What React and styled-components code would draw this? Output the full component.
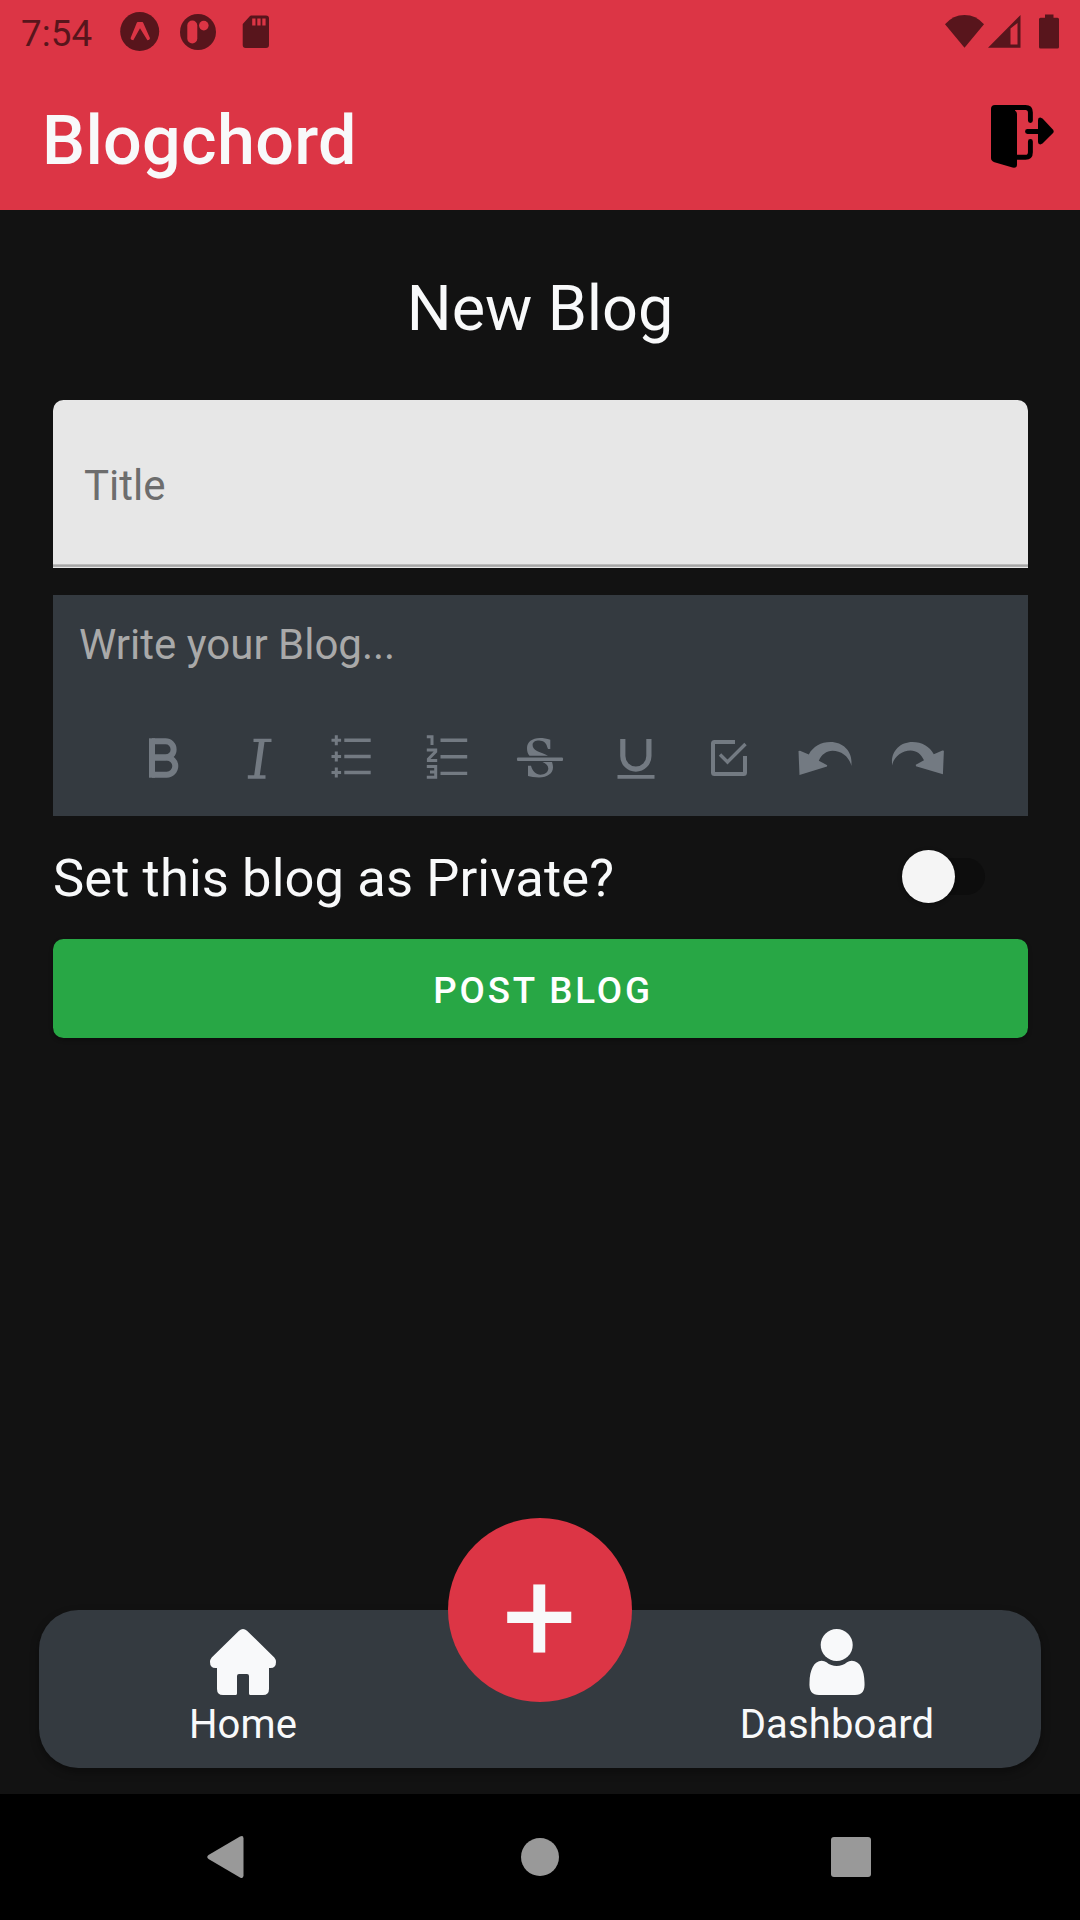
import React from "react";
import styled, { createGlobalStyle } from "styled-components";

const GlobalStyle = createGlobalStyle`
  * { box-sizing: border-box; }
  body {
    margin: 0;
    background: #121212;
    font-family: Roboto, "Noto Sans", sans-serif;
    -webkit-font-smoothing: antialiased;
  }
`;

const Screen = styled.div`
  width: 1080px;
  height: 1920px;
  display: flex;
  flex-direction: column;
  background: #121212;
  color: #f8f9fa;
  overflow: hidden;
`;

const Icon = styled.svg`
  display: block;
  flex: none;
  overflow: visible;
`;

const StatusBar = styled.div`
  height: 63px;
  display: flex;
  justify-content: space-between;
  padding: 0 21px;
  background: #dc3545;
  color: #58151c;
`;

const StatusGroup = styled.div`
  display: flex;
  align-items: center;
  gap: ${(p) => p.$gap}px;
`;

const Clock = styled.span`
  width: 78px;
  padding-top: 4px;
  font-size: 36.75px;
  letter-spacing: 0.1px;
`;

const AppBar = styled.header`
  height: 147px;
  display: flex;
  align-items: center;
  justify-content: space-between;
  padding: 0 26px 0 42px;
  background: #dc3545;
`;

const Brand = styled.h1`
  margin: 0;
  padding-top: 8px;
  font-size: 68.25px;
  font-weight: 500;
  letter-spacing: 0.3px;
`;

const LogoutButton = styled.button`
  border: 0;
  padding: 0;
  background: none;
  color: #000;
`;

const Form = styled.main`
  flex: 1;
  display: flex;
  flex-direction: column;
  padding: 0 52px 0 53px;
`;

const Heading = styled.h2`
  height: 190px;
  margin: 0;
  padding: 7px 1px 0 0;
  line-height: 183px;
  text-align: center;
  font-size: 63px;
  font-weight: 400;
  letter-spacing: -0.1px;
`;

const TitleField = styled.div`
  height: 168px;
  padding: 4px 31px 0;
  line-height: 164px;
  border-radius: 10.5px 10.5px 0 0;
  background: linear-gradient(#bdbdbd 1px, #a6a6a6 1px 2px, #b0b0b0 2px) 0 164px / 100% 3px no-repeat #e7e7e7;
  color: #6d6d6d;
  font-size: 42px;
`;

const Editor = styled.section`
  height: 221px;
  margin-top: 27px;
  display: flex;
  flex-direction: column;
  background: #343a40;
`;

const EditorText = styled.div`
  height: 105px;
  padding: 0 26px;
  line-height: 100px;
  color: #a9a9a9;
  font-size: 42px;
`;

const Toolbar = styled.div`
  height: 116px;
  display: flex;
  justify-content: center;
  padding-right: 1px;
  color: #737a82;
`;

const Tool = styled.button`
  width: 94.5px;
  height: 116px;
  display: flex;
  justify-content: center;
  padding: 28px 0 0;
  border: 0;
  background: none;
  color: inherit;
`;

const PrivacyRow = styled.div`
  height: 123px;
  display: flex;
  align-items: center;
  justify-content: space-between;
  padding-right: 43px;
`;

const PrivacyLabel = styled.span`
  padding-top: 1px;
  font-size: 52.5px;
  letter-spacing: 0.1px;
`;

const Switch = styled.span`
  width: 83px;
  height: 37px;
  margin-top: -2px;
  display: flex;
  align-items: center;
  border-radius: 19px;
  background: #0d0d0d;
`;

const Thumb = styled.span`
  width: 53px;
  height: 53px;
  flex: none;
  border-radius: 50%;
  background: #f5f5f5;
  box-shadow: 0 1px 4px rgba(0, 0, 0, 0.4);
`;

const PostButton = styled.button`
  height: 99px;
  padding: 4px 0 0 5px;
  border: 0;
  border-radius: 10.5px;
  background: #28a745;
  color: #fff;
  font: 500 36.75px Roboto, sans-serif;
  letter-spacing: 2.85px;
  box-shadow: 0 2px 4px rgba(0, 0, 0, 0.3);
`;

const TabBar = styled.nav`
  height: 158px;
  margin: 0 39px 26px;
  display: grid;
  grid-template-columns: 408px 186px 408px;
  border-radius: 39.4px;
  background: #343a40;
  box-shadow: 0 4px 8px rgba(0, 0, 0, 0.35);
`;

const Tab = styled.a`
  display: flex;
  flex-direction: column;
  align-items: center;
  padding-top: 19px;
  color: #f8f9fa;
`;

const TabLabel = styled.span`
  height: 60px;
  line-height: 60px;
  font-size: 40px;
  letter-spacing: 0.12px;
`;

const AddButton = styled.button`
  width: 184px;
  height: 184px;
  margin: -92px auto 0;
  padding: 7px 1px 0 0;
  border: 0;
  border-radius: 50%;
  background: #dc3545;
  color: #f8f9fa;
  font: 400 131.25px/184px Roboto, sans-serif;
  overflow: hidden;
`;

const SystemNav = styled.footer`
  height: 126px;
  display: flex;
  align-items: center;
  justify-content: space-between;
  padding: 0 209px 0 207px;
  background: #000;
  color: #999;
`;

const line = (w) => ({ fill: "none", stroke: "currentColor", strokeWidth: w });

const undoPath =
  "M4.5 23 L6 22.7 L14.8 26.4 C19 18.5 27 14 36.5 14 C49 14 57.5 23 57.5 34 L57.4 38 C55.5 29 47.5 22.7 38.5 22.7 C32.5 22.7 27.5 26.5 24.8 32.7 L33.2 37.2 L33 38.6 L5.5 47 Z";

const tools = [
  [
    "Bold",
    <g key="b">
      <path {...line(6)} d="M20 13.3H33.5a8.1 8.1 0 0 1 0 16.2H20" />
      <path {...line(6)} d="M20 29.5H34.700a8.600 8.600 0 0 1 0 17.200H20" />
      <path {...line(6)} d="M20 10.300V49.700" />
    </g>,
  ],
  ["Italic", <path key="i" fill="currentColor" d="M26.5 10.7h18v3.4h-7l-4.7 33.2h5.7v3.4H20.8v-3.4h6.4L31.8 14.1h-5.3z" />],
  [
    "Bulleted list",
    <g key="u">
      <path {...line(3.5)} d="M23.3 12.2H49.7M23.3 28.5H49.7M23.3 44.6H49.7" />
      <path {...line(3)} d="M10.5 12.2h9.6m-4.8-5v10M10.5 28.5h9.6m-4.8-5v10M10.5 44.6h9.6m-4.8-5v10" />
    </g>,
  ],
  [
    "Numbered list",
    <g key="o">
      <path {...line(3.4)} d="M24.5 12.2H51.2M24.5 28.7H51.2M24.5 45.4H51.2" />
      <path {...line(3)} d="M10.8 8.7H16V17M10.8 21.9H19.7V23.6L12.4 31V32.5H21.2M10.8 38.6H19.7V49.2H10.8M14 43.9H19.7" />
    </g>,
  ],
  [
    "Strikethrough",
    <g key="s" fill="currentColor">
      <path d="M40.3 21V11.8C37 10.5 33 10 30 10C22 10 17 14.3 17 20C17 23.5 17.8 26 19.5 27.7H38C34 25.5 29.5 24.5 27 23C24 21.3 22.6 19.5 22.6 17C22.6 14 25.5 12.6 29 12.6C33.5 12.6 36.5 15.5 37 18.5L38 21Z" />
      <path d="M18 37.7V48C20.5 48.8 25 49.4 29 49.4C37.5 49.4 43 45.2 43 39.5C43 37.2 42.5 35.5 42 34H32.5C36 35.5 38.3 37.5 38.3 40.5C38.3 44.3 34.5 46.7 30.5 46.7C26 46.7 22.5 43 21 37.7Z" />
      <rect x="7" y="29.4" width="46" height="3.6" rx="1" />
    </g>,
  ],
  [
    "Underline",
    <g key="n">
      <path {...line(5.2)} d="M17.8 11V28a13.05 13.1 0 0 0 26.1 0V11" />
      <path {...line(3.7)} d="M12.5 48.8H49.5" />
    </g>,
  ],
  [
    "Checklist",
    <g key="c">
      <path {...line(4)} d="M36 14H15.5Q14 14 14 15.5V44.5Q14 46 15.5 46H44.5Q46 46 46 44.5V28" />
      <path {...line(3.4)} d="M21 26.5L28.5 34L46.5 16" />
    </g>,
  ],
  ["Undo", <path key="z" fill="currentColor" d={undoPath} />],
  ["Redo", <path key="r" fill="currentColor" transform="matrix(-.98 0 0 .98 60.3 .3)" d={undoPath} />],
];

export default function App() {
  return (
    <Screen>
      <GlobalStyle />
      <StatusBar>
        <StatusGroup $gap={21}>
          <Clock>7:54</Clock>
          <Icon width="39" height="39" viewBox="0 0 39 39">
            <circle cx="19.7" cy="19.5" r="19.5" fill="currentColor" />
            <path fill="#dc3545" d="M17.8 10h4.4q.7 0 1 .8l6.8 15.4q-.3 1.8-2.6 2.1L20 16.2l-6.7 12.1q-2.4-.3-2.8-2.1L16.8 10.8q.3-.8 1-.8z" />
          </Icon>
          <Icon width="36" height="36" viewBox="0 0 36 36">
            <circle cx="18" cy="18" r="18" fill="currentColor" />
            <rect x="7.3" y="6.5" width="10" height="23" rx="5" fill="#dc3545" />
            <circle cx="23.8" cy="11.6" r="4.8" fill="#dc3545" />
          </Icon>
          <Icon width="38" height="34" viewBox="0 0 38 34">
            <path fill="currentColor" fillRule="evenodd" d="M14 .5H29q3 0 3 3V30q0 3-3 3H8.700q-3 0-3-3V9.500Q5.700 9 6.200 8.500L13 1Q13.500.5 14 .5zM15.200 3.500v7h3.300v-7zM20.300 3.500v7h3.300v-7zM25.300 3.500v7h3.300v-7z" />
          </Icon>
        </StatusGroup>
        <StatusGroup $gap={3.5}>
          <Icon width="39" height="34" viewBox="0 0 39 34">
            <path fill="currentColor" d="M0 9.300Q8 0 19.500 0T39 9.300L19.500 32.700z" />
          </Icon>
          <Icon width="33" height="34" viewBox="0 0 33 34">
            <path fill="currentColor" fillRule="evenodd" d="M0 32.700L32.500 0V32.700zM22.500 13.500V29.500H29.500V8z" />
          </Icon>
          <Icon width="35" height="34" viewBox="0 0 35 34">
            <path fill="currentColor" d="M21-.4h8.500v3.200H33.500q1.500 0 1.500 1.500V32q0 1.500-1.500 1.500H16.500Q15 33.500 15 32V4.300q0-1.500 1.500-1.500H21z" />
          </Icon>
        </StatusGroup>
      </StatusBar>

      <AppBar>
        <Brand>Blogchord</Brand>
        <LogoutButton aria-label="Log out">
          <Icon width="63" height="63" viewBox="0 0 63 63">
            <path fill="currentColor" d="M4 0H24V5.400Q26 6.500 26 9V59.500Q26 63.500 21.500 62.600L3.500 57.200Q0 56 0 53V4Q0 0 4 0z" />
            <path {...line(4.9)} strokeLinecap="round" d="M22 2.500H34.500Q39.400 2.500 39.400 7.500V15.500M24 52.300H34.500Q39.400 52.300 39.400 47.300V36.500M36.500 26.500H50" />
            <path fill="currentColor" d="M47 15Q47 12.600 49.300 12.600L51.500 13.500L62.300 25Q63.200 26.400 62.300 27.800L51.500 38.500L49.300 39.400Q47 39.400 47 37z" />
          </Icon>
        </LogoutButton>
      </AppBar>

      <Form>
        <Heading>New Blog</Heading>
        <TitleField>Title</TitleField>
        <Editor>
          <EditorText>Write your Blog...</EditorText>
          <Toolbar>
            {tools.map(([name, art]) => (
              <Tool key={name} aria-label={name}>
                <Icon width="60" height="60" viewBox="0 0 60 60">{art}</Icon>
              </Tool>
            ))}
          </Toolbar>
        </Editor>
        <PrivacyRow>
          <PrivacyLabel>Set this blog as Private?</PrivacyLabel>
          <Switch role="switch" aria-checked="false">
            <Thumb />
          </Switch>
        </PrivacyRow>
        <PostButton>POST BLOG</PostButton>
      </Form>

      <TabBar>
        <Tab>
          <Icon width="66" height="66" viewBox="0 0 66 66">
            <path fill="currentColor" d="M29 1.700Q33-1.500 37 1.700L64.300 28.500Q66 30.500 66 33Q66 39 60.500 39H59V60Q59 66 53 66H40.500Q39 66 39 64.500V47Q39 45 37 45H29Q27 45 27 47V64.500Q27 66 25.500 66H13Q7 66 7 60V39H5.500Q0 39 0 33Q0 30.500 1.700 28.500Z" />
          </Icon>
          <TabLabel>Home</TabLabel>
        </Tab>
        <AddButton>+</AddButton>
        <Tab>
          <Icon width="66" height="66" viewBox="0 0 66 66">
            <circle cx="32.700" cy="16" r="16" fill="currentColor" />
            <path fill="currentColor" d="M17.700 31.700Q20.500 31.700 22.500 33.200Q27 37 32.700 37T43 33.200Q45 31.700 47.700 31.700C56 31.700 60.300 41 60.500 53.500Q61.500 66 51 66H15Q4.500 66 5.500 53.500C5.700 41 10 31.700 17.700 31.700Z" />
          </Icon>
          <TabLabel>Dashboard</TabLabel>
        </Tab>
      </TabBar>

      <SystemNav>
        <Icon width="42" height="42" viewBox="0 0 42 42">
          <path fill="currentColor" d="M33 .600Q36.500-1 36.500 2.500V39.500Q36.500 43 33 41.400L1.500 23Q-1 21 1.500 19Z" />
        </Icon>
        <Icon width="38" height="38" viewBox="0 0 38 38">
          <circle cx="19" cy="19" r="19" fill="currentColor" />
        </Icon>
        <Icon width="40" height="40" viewBox="0 0 40 40">
          <rect width="40" height="40" rx="3" fill="currentColor" />
        </Icon>
      </SystemNav>
    </Screen>
  );
}
